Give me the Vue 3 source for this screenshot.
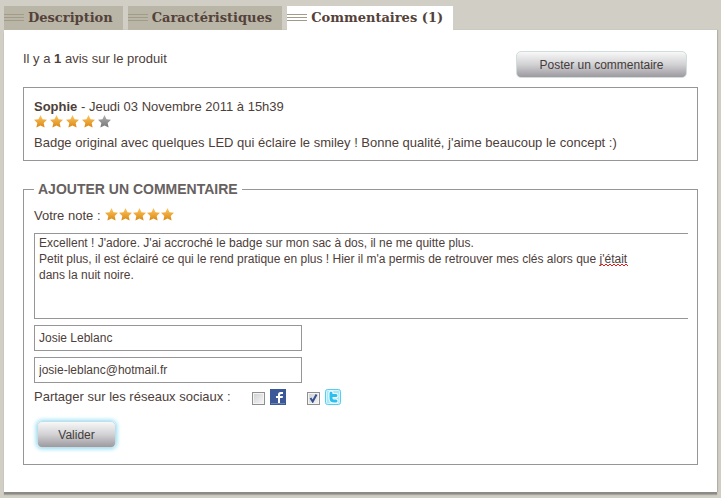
<template>
  <main class="product-tabs">
    <nav class="product-tabs__nav" aria-label="Fiche produit">
      <a
        v-for="tab in tabs"
        :key="tab.id"
        :href="`#${tab.id}`"
        class="product-tabs__tab"
        :class="{ 'product-tabs__tab--active': tab.id === activeTab }"
        @click.prevent="activeTab = tab.id"
      >
        <span class="product-tabs__lines"></span>
        {{ tab.label }}
      </a>
    </nav>

    <section class="product-tabs__panel">
      <header class="reviews-header">
        <p>Il y a <strong>1</strong> avis sur le produit</p>
        <button type="button" class="btn btn--post">Poster un commentaire</button>
      </header>

      <article v-for="review in reviews" :key="review.author" class="review">
        <p class="review__meta">
          <strong>{{ review.author }}</strong> - {{ review.date }}
        </p>
        <div class="review__stars" role="img" :aria-label="`${review.rating} sur 5`">
          <svg v-for="n in 5" :key="n" class="star" viewBox="0 0 13 13">
            <path :d="starPath" :fill="n <= review.rating ? 'url(#star-gold)' : 'url(#star-grey)'" />
          </svg>
        </div>
        <p class="review__text">{{ review.text }}</p>
      </article>

      <form @submit.prevent>
        <fieldset class="comment-form">
          <legend>AJOUTER UN COMMENTAIRE</legend>

          <div class="comment-form__rating">
            <span>Votre note :</span>
            <div class="comment-form__stars">
              <button
                v-for="n in 5"
                :key="n"
                type="button"
                class="comment-form__star"
                :aria-label="`Note ${n}`"
                @click="rating = n"
              >
                <svg class="star" viewBox="0 0 13 13">
                  <path :d="starPath" :fill="n <= rating ? 'url(#star-gold)' : 'url(#star-grey)'" />
                </svg>
              </button>
            </div>
          </div>

          <div class="comment-form__message">
            <textarea v-model="message" aria-label="Commentaire" spellcheck="false"></textarea>
            <svg class="comment-form__spelling" viewBox="0 0 28 4" aria-hidden="true">
              <path d="M0 3l2-2 2 2 2-2 2 2 2-2 2 2 2-2 2 2 2-2 2 2 2-2 2 2 2-2 2 2" />
            </svg>
          </div>
          <input v-model="name" class="comment-form__field" type="text" aria-label="Nom" />
          <input v-model="email" class="comment-form__field" type="email" aria-label="E-mail" />

          <div class="comment-form__share">
            <span class="comment-form__share-title">Partager sur les réseaux sociaux :</span>
            <label class="share-option">
              <input v-model="shareFacebook" type="checkbox" aria-label="Facebook" />
              <svg viewBox="0 0 16 16">
                <rect width="16" height="16" fill="#3b5998" />
                <path d="M1 14.500h14" stroke="#6d84b4" />
                <path d="M8 14V9H6V7h2V5.500Q8 3 10.500 3H13v2h-1.500Q10 5 10 6v1h3l-.4 2H10v5z" fill="#fff" />
              </svg>
            </label>
            <label class="share-option">
              <input v-model="shareTwitter" type="checkbox" aria-label="Twitter" />
              <svg viewBox="0 0 16 16">
                <rect x=".5" y=".5" width="15" height="15" rx="2" fill="#a5e9fa" stroke="#55cdf1" />
                <rect x="1.500" y="1.500" width="13" height="13" rx="1" fill="none" stroke="#d2f6fd" />
                <path d="M6 4v5q0 3 3 3h2M6 6.500h5" fill="none" stroke="#fff" stroke-width="5" stroke-linecap="round" />
                <path d="M6 4v5q0 3 3 3h2M6 6.500h5" fill="none" stroke="#2cc0ee" stroke-width="3" stroke-linecap="round" />
              </svg>
            </label>
          </div>

          <button type="submit" class="btn btn--submit">Valider</button>
        </fieldset>
      </form>
    </section>

    <svg class="defs" width="0" height="0" aria-hidden="true">
      <defs>
        <linearGradient id="star-gold" x1="0" y1="0" x2="0" y2="1">
          <stop offset="0" stop-color="#ffc862" />
          <stop offset="1" stop-color="#d88712" />
        </linearGradient>
        <linearGradient id="star-grey" x1="0" y1="0" x2="0" y2="1">
          <stop offset="0" stop-color="#b0b0b0" />
          <stop offset="1" stop-color="#777777" />
        </linearGradient>
      </defs>
    </svg>
  </main>
</template>

<script setup>
import { ref } from 'vue';

const tabs = [
  { id: 'description', label: 'Description' },
  { id: 'caracteristiques', label: 'Caractéristiques' },
  { id: 'commentaires', label: 'Commentaires (1)' },
];
const activeTab = ref('commentaires');

const reviews = [
  {
    author: 'Sophie',
    date: 'Jeudi 03 Novembre 2011 à 15h39',
    rating: 4,
    text: "Badge original avec quelques LED qui éclaire le smiley ! Bonne qualité, j'aime beaucoup le concept :)",
  },
];

const rating = ref(5);
const message = ref(
  "Excellent ! J'adore. J'ai accroché le badge sur mon sac à dos, il ne me quitte plus.\n" +
    "Petit plus, il est éclairé ce qui le rend pratique en plus ! Hier il m'a permis de retrouver mes clés alors que j'était dans la nuit noire."
);
const name = ref('Josie Leblanc');
const email = ref('josie-leblanc@hotmail.fr');
const shareFacebook = ref(false);
const shareTwitter = ref(true);

const starPath = 'M6.500 0l2 4.200 4.500.5-3.300 3.200.9 4.700-4.100-2.200-4.100 2.200.9-4.700L0 4.700l4.500-.5z';
</script>

<style>
body {
  background: #d1cec5;
}
</style>

<style scoped>
.product-tabs {
  padding: 6px 4px;
  font-family: 'Liberation Sans', Arial, sans-serif;
  font-size: 13px;
  line-height: 16px;
  color: #4d403a;
}

p {
  margin: 0;
}

.product-tabs__nav {
  display: flex;
  gap: 5px;
}

.product-tabs__tab {
  display: flex;
  align-items: center;
  gap: 4px;
  height: 24px;
  padding-right: 10px;
  background: #b9b5a7;
  color: #54423a;
  font-family: 'DejaVu Serif', serif;
  font-size: 13px;
  font-weight: bold;
  text-decoration: none;
  white-space: nowrap;
}

.product-tabs__tab--active {
  background: #fff;
}

.product-tabs__lines {
  width: 20px;
  height: 8px;
  background: repeating-linear-gradient(#a29b88 0 1px, transparent 1px 3px);
}

.product-tabs__panel {
  padding: 21px 19px 27px;
  background: #fff;
  box-shadow: 0 2px 0 #8b8a84, 0 3px 1px #a5a39a, 1px 0 1px #b5b2a8;
}

.reviews-header {
  display: flex;
  justify-content: space-between;
  align-items: flex-start;
  padding-right: 11px;
}

.btn {
  padding: 0;
  border: 1px solid #d0dede;
  border-radius: 5px;
  background: linear-gradient(#f8f8f8, #d2d1d4 50%, #9c9a9f);
  color: #443c39;
  font: inherit;
  font-size: 12px;
  cursor: pointer;
}

.btn--post {
  width: 171px;
  height: 27px;
}

.btn--submit {
  width: 79px;
  height: 27px;
  margin: 16px 0 0 3px;
  border-color: #c1dfe8;
  box-shadow: 0 0 4px 1px #8fdcf5;
}

.review {
  margin-top: 9px;
  padding: 11px 10px 9px;
  border: 1px solid #969696;
}

.review__stars {
  display: flex;
  gap: 3px;
  margin-bottom: 7px;
}

.star {
  display: block;
  width: 13px;
  height: 13px;
}

.comment-form {
  min-width: 0;
  margin: 20px 0 0;
  padding: 11px 9px 16px 10px;
  border: 1px solid #969696;
}

.comment-form legend {
  padding: 0 4px;
  color: #67615f;
  font-size: 14px;
  font-weight: bold;
}

.comment-form__rating {
  display: flex;
  gap: 4px;
}

.comment-form__stars {
  display: flex;
  gap: 1px;
}

.comment-form__star {
  height: 13px;
  padding: 0;
  border: 0;
  background: none;
  cursor: pointer;
}

.comment-form__message {
  position: relative;
  margin-top: 9px;
}

.comment-form__message textarea {
  display: block;
  box-sizing: border-box;
  width: 100%;
  height: 86px;
  margin: 0;
  padding: 1px 40px 1px 4px;
  border: 1px solid #969696;
  border-right: 0;
  border-radius: 0;
  background: #fff;
  color: inherit;
  font: inherit;
  font-size: 12px;
  resize: none;
  outline: none;
}

/* wavy underline below the misspelt word */
.comment-form__spelling {
  position: absolute;
  top: 30px;
  left: 566px;
  width: 28px;
  height: 4px;
  fill: none;
  stroke: #e21a1a;
  pointer-events: none;
}

.comment-form__field {
  display: block;
  box-sizing: border-box;
  width: 268px;
  max-width: 100%;
  height: 26px;
  margin: 6px 0 0;
  padding: 0 4px;
  border: 1px solid #969696;
  border-radius: 0;
  background: #fff;
  color: inherit;
  font: inherit;
  font-size: 12px;
  outline: none;
}

.comment-form__share {
  display: flex;
  align-items: center;
  gap: 21px;
  margin-top: 6px;
}

.share-option {
  display: flex;
  align-items: center;
  gap: 5px;
}

.share-option svg {
  width: 16px;
  height: 16px;
}

.share-option input {
  appearance: none;
  width: 13px;
  height: 13px;
  margin: 2px 0 0;
  border: 1px solid #8e8f8f;
  background: linear-gradient(135deg, #cfd0d2, #f6f6f6);
  box-shadow: inset 0 0 0 1px #f4f4f4;
}

.share-option input:checked {
  background: url("data:image/svg+xml,%3Csvg xmlns='http://www.w3.org/2000/svg' viewBox='0 0 11 11'%3E%3Cpath d='M2.500 5l2.200 3.500L8.500 1.500' fill='none' stroke='%2333508f' stroke-width='2'/%3E%3C/svg%3E"),
    linear-gradient(135deg, #cfd0d2, #f6f6f6);
}

.defs {
  position: absolute;
}
</style>
